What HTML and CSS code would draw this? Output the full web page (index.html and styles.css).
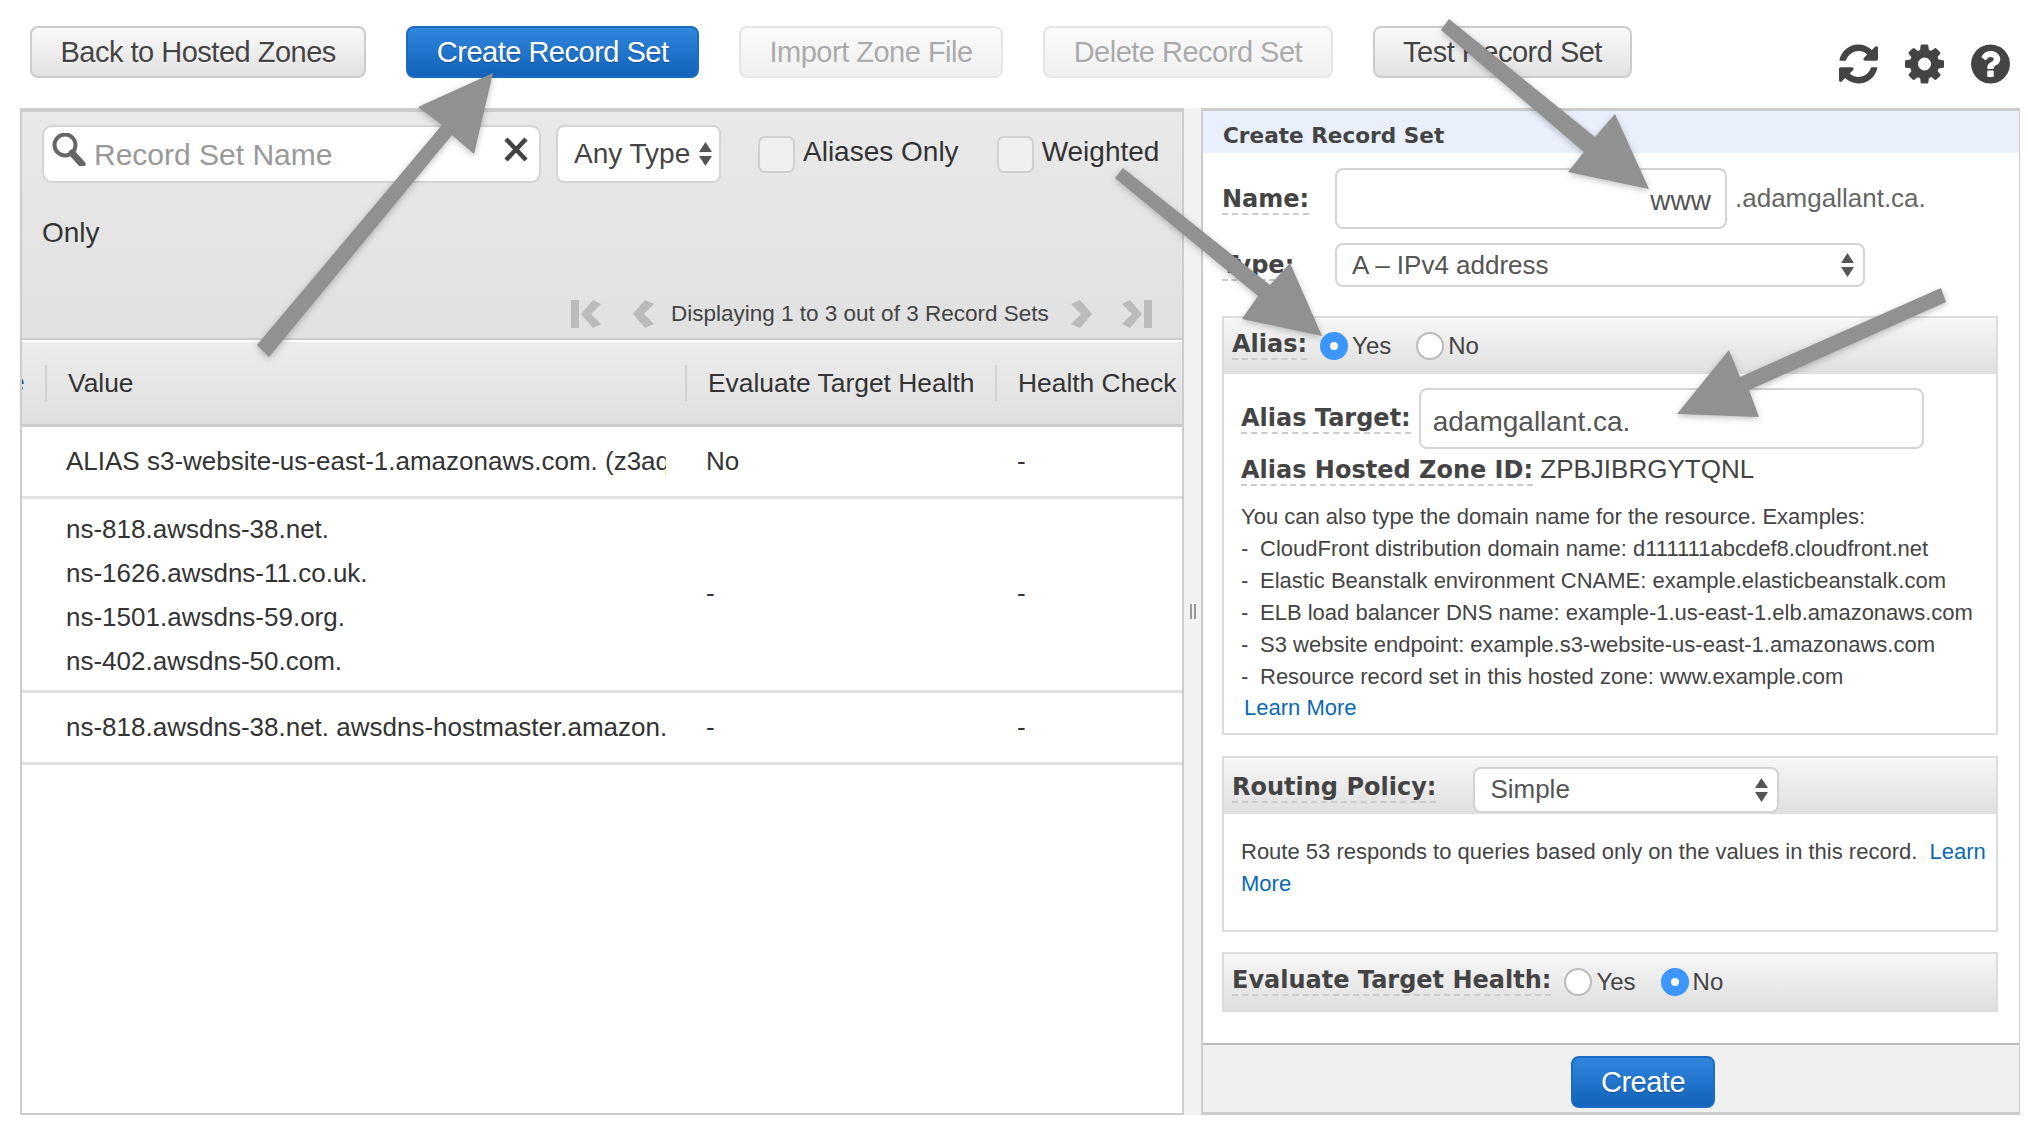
FILE: index.html
```html
<!DOCTYPE html>
<html lang="en">
<head>
    <meta charset="UTF-8">
    <title>Create Record Set</title>
    <link rel="stylesheet" href="styles.css">
</head>
<body>
    <div class="topbar">
        <button class="btn">Back to Hosted Zones</button>
        <button class="btn btn-primary">Create Record Set</button>
        <button class="btn btn-disabled">Import Zone File</button>
        <button class="btn btn-disabled">Delete Record Set</button>
        <button class="btn">Test Record Set</button>
        <div class="top-icons">
            <svg class="top-icon" viewBox="0 0 1536 1536"><path d="M1511 928q0 5-1 7-64 268-268 434.500t-478 166.500q-146 0-282.500-55t-243.500-157l-129 129q-19 19-45 19t-45-19-19-45v-448q0-26 19-45t45-19h448q26 0 45 19t19 45-19 45l-137 137q71 66 161 102t187 36q134 0 250-65t186-179q11-17 53-117 8-23 30-23h192q13 0 22.500 9.500t9.500 22.500zm25-800v448q0 26-19 45t-45 19h-448q-26 0-45-19t-19-45 19-45l138-138q-148-137-349-137-134 0-250 65t-186 179q-11 17-53 117-8 23-30 23h-199q-13 0-22.500-9.500t-9.500-22.500v-7q65-268 270-434.500t480-166.500q146 0 284 55.500t245 156.500l130-129q19-19 45-19t45 19 19 45z"/></svg>
            <svg class="top-icon" viewBox="128 128 1536 1536"><path fill-rule="evenodd" d="M1152 896q0-106-75-181t-181-75-181 75-75 181 75 181 181 75 181-75 75-181zm512-109v222q0 12-8 23t-20 13l-185 28q-19 54-39 91 35 50 107 138 10 12 10 25t-9 23q-27 37-99 108t-94 71q-12 0-26-9l-138-108q-44 23-91 38-16 136-29 186-7 28-36 28h-222q-14 0-24.500-8.500t-11.500-21.500l-28-184q-49-16-90-37l-141 107q-10 9-25 9-14 0-25-11-126-114-165-168-7-10-7-23 0-12 8-23 15-21 51-66.500t54-70.500q-27-50-41-99l-183-27q-13-2-21-12.500t-8-23.500v-222q0-12 8-23t19-13l186-28q14-46 39-92-40-57-107-138-10-12-10-24 0-10 9-23 26-36 98.500-107.500t94.500-71.500q13 0 26 10l138 107q44-23 91-38 16-136 29-186 7-28 36-28h222q14 0 24.500 8.500t11.500 21.500l28 184q49 16 90 37l142-107q9-9 24-9 13 0 25 10 129 119 165 170 7 8 7 22 0 12-8 23-15 21-51 66.500t-54 70.500q26 50 41 98l183 28q13 2 21 12.500t8 23.500z"/></svg>
            <svg class="top-icon" viewBox="128 128 1536 1536"><path fill-rule="evenodd" d="M1024 1376v-192q0-14-9-23t-23-9h-192q-14 0-23 9t-9 23v192q0 14 9 23t23 9h192q14 0 23-9t9-23zm256-672q0-88-55.500-163t-138.500-116-170-41q-243 0-371 213-15 24 8 42l132 100q7 6 19 6 16 0 25-12 53-68 86-92 34-24 86-24 48 0 85.500 26t37.500 59q0 38-20 61t-68 45q-63 28-115.500 86.500t-52.500 125.500v36q0 14 9 23t23 9h192q14 0 23-9t9-23q0-19 21.500-49.500t54.500-49.500q32-18 49-28.500t46-35 44.500-48 28-60.500 12.500-81zm384 192q0 209-103 385.500t-279.500 279.500-385.500 103-385.500-103-279.500-279.500-103-385.500 103-385.500 279.500-279.500 385.500-103 385.500 103 279.500 279.500 103 385.500z"/></svg>
        </div>
    </div>

    <div class="main">
        <div class="left-panel">
            <div class="filter-bar">
                <div class="filter-row">
                    <div class="search-box">
                        <svg class="search-icon" viewBox="0 0 34 33"><circle cx="13" cy="12" r="10.500" fill="none" stroke="#666" stroke-width="4"/><path d="M20 20l10 11" stroke="#666" stroke-width="7" stroke-linecap="round"/></svg>
                        <span class="placeholder">Record Set Name</span>
                        <svg class="clear-icon" viewBox="0 0 26 25"><path d="M3 2l20 21M23 2L3 23" stroke="#444" stroke-width="4.500"/></svg>
                    </div>
                    <div class="type-select">
                        <span>Any Type</span>
                        <svg class="updown" viewBox="0 0 13 24"><path d="M6.500 0L13 10H0zM6.500 24L0 14h13z" fill="#555"/></svg>
                    </div>
                    <label class="check check-aliases"><span class="check-box"></span>Aliases Only</label>
                    <label class="check"><span class="check-box"></span>Weighted</label>
                </div>
                <div class="only-line">Only</div>
                <div class="pager">
                    <svg class="pager-icon" viewBox="0 0 32 28"><path d="M1 0h8v28H1zM23 0l8 4-10 10 10 10-8 4L11 14z" fill="#bbb"/></svg>
                    <svg class="pager-icon pager-prev" viewBox="0 0 24 28"><path d="M13 0l9 4-10 10 10 10-9 4L1 14z" fill="#bbb"/></svg>
                    <span class="pager-text">Displaying 1 to 3 out of 3 Record Sets</span>
                    <svg class="pager-icon pager-next" viewBox="0 0 24 28"><path d="M11 0L2 4l10 10L2 24l9 4 12-14z" fill="#bbb"/></svg>
                    <svg class="pager-icon pager-last" viewBox="0 0 32 28"><path d="M23 0h8v28h-8zM9 0L1 4l10 10L1 24l8 4 12-14z" fill="#bbb"/></svg>
                </div>
            </div>
            <table class="records">
                <colgroup>
                    <col class="col-name"><col class="col-value"><col class="col-eval"><col class="col-health">
                </colgroup>
                <thead>
                    <tr>
                        <th class="th-cut">e</th>
                        <th><span class="th-label">Value</span></th>
                        <th><span class="th-label">Evaluate Target Health</span></th>
                        <th><span class="th-label">Health Check</span></th>
                    </tr>
                </thead>
                <tbody>
                    <tr class="row-short">
                        <td></td>
                        <td><div class="cell-clip">ALIAS s3-website-us-east-1.amazonaws.com. (z3aqbsw93qdmnz)</div></td>
                        <td>No</td>
                        <td>-</td>
                    </tr>
                    <tr class="row-tall">
                        <td></td>
                        <td class="cell-lines">
                            <div class="cell-line">ns-818.awsdns-38.net.</div>
                            <div class="cell-line">ns-1626.awsdns-11.co.uk.</div>
                            <div class="cell-line">ns-1501.awsdns-59.org.</div>
                            <div class="cell-line">ns-402.awsdns-50.com.</div>
                        </td>
                        <td class="cell-dash">-</td>
                        <td class="cell-dash">-</td>
                    </tr>
                    <tr class="row-short">
                        <td></td>
                        <td><div class="cell-clip">ns-818.awsdns-38.net. awsdns-hostmaster.amazon.com. 1 7200</div></td>
                        <td>-</td>
                        <td>-</td>
                    </tr>
                </tbody>
            </table>
        </div>

        <div class="splitter"><span class="grip"></span></div>

        <div class="right-panel">
            <div class="panel-title">Create Record Set</div>
            <div class="panel-body">
                <div class="field-row field-name">
                    <span class="field-label"><span class="term">Name:</span></span>
                    <div class="text-input name-input">www</div>
                    <span class="domain">.adamgallant.ca.</span>
                </div>
                <div class="field-row field-type">
                    <span class="field-label"><span class="term">Type:</span></span>
                    <div class="select-box type-box">
                        <span>A – IPv4 address</span>
                        <svg class="updown" viewBox="0 0 13 24"><path d="M6.500 0L13 10H0zM6.500 24L0 14h13z" fill="#555"/></svg>
                    </div>
                </div>

                <div class="box box-alias">
                    <div class="box-head">
                        <span class="term">Alias:</span>
                        <span class="radio radio-on radio-first"></span><span class="radio-text">Yes</span>
                        <span class="radio radio-second"></span><span class="radio-text">No</span>
                    </div>
                    <div class="box-body">
                        <div class="target-row">
                            <span class="term target-label">Alias Target:</span>
                            <div class="text-input target-input">adamgallant.ca.</div>
                        </div>
                        <div class="zone-row"><span class="term">Alias Hosted Zone ID:</span> ZPBJIBRGYTQNL</div>
                        <div class="help-line">You can also type the domain name for the resource. Examples:</div>
                        <div class="help-line help-item">CloudFront distribution domain name: d111111abcdef8.cloudfront.net</div>
                        <div class="help-line help-item">Elastic Beanstalk environment CNAME: example.elasticbeanstalk.com</div>
                        <div class="help-line help-item">ELB load balancer DNS name: example-1.us-east-1.elb.amazonaws.com</div>
                        <div class="help-line help-item">S3 website endpoint: example.s3-website-us-east-1.amazonaws.com</div>
                        <div class="help-line help-item">Resource record set in this hosted zone: www.example.com</div>
                        <a class="link learn-more" href="#">Learn More</a>
                    </div>
                </div>

                <div class="box box-routing">
                    <div class="box-head routing-head">
                        <span class="term routing-label">Routing Policy:</span>
                        <div class="select-box routing-select">
                            <span>Simple</span>
                            <svg class="updown" viewBox="0 0 13 24"><path d="M6.500 0L13 10H0zM6.500 24L0 14h13z" fill="#555"/></svg>
                        </div>
                    </div>
                    <div class="box-body routing-text">
                        Route 53 responds to queries based only on the values in this record.&nbsp; <a class="link" href="#">Learn More</a>
                    </div>
                </div>

                <div class="box box-health">
                    <div class="box-head">
                        <span class="term">Evaluate Target Health:</span>
                        <span class="radio radio-first"></span><span class="radio-text">Yes</span>
                        <span class="radio radio-on radio-second"></span><span class="radio-text">No</span>
                    </div>
                </div>
            </div>
            <div class="panel-footer">
                <button class="btn btn-primary btn-create">Create</button>
            </div>
        </div>
    </div>

    <svg class="arrows" viewBox="0 0 2028 1124">
        <polygon points="257,345 442,125 418,107 493,73 474,154 452,135 269,357"/>
        <polygon points="1449,19 1595,137 1615,114 1649,189 1568,172 1584,152 1441,30"/>
        <polygon points="1123,168 1270,285 1290,263 1322,336 1242,319 1258,296 1115,178"/>
        <polygon points="1941,288 1740,377 1729,350 1677,414 1759,417 1749,390 1946,302"/>
    </svg>
</body>
</html>
```

FILE: styles.css
```css
* {
    box-sizing: border-box;
}

body {
    position: relative;
    margin: 0;
    height: 1124px;
    overflow: hidden;
    background-color: white;
    font-family: "Liberation Sans", Arial, sans-serif;
    font-size: 24px;
    color: #444;
}

/* top buttons */
.topbar {
    display: flex;
    align-items: flex-start;
    gap: 40px;
    height: 108px;
    padding: 26px 18px 0 30px;
}

.btn {
    height: 52px;
    padding: 0 28.500px;
    border: 2px solid #ccc;
    border-radius: 8px;
    background: linear-gradient(#fafafa, #e2e2e2);
    font-family: inherit;
    font-size: 29px;
    letter-spacing: -0.5px;
    color: #444;
    text-shadow: 0 1px 0 white;
}

.btn-primary {
    border-color: #1a6cc2;
    background: linear-gradient(#3186de, #1263b9);
    color: white;
    text-shadow: 0 1px 1px rgba(0, 0, 0, 0.3);
}

.btn-disabled {
    border-color: #e6e6e6;
    background: linear-gradient(#fafafa, #f0f0f0);
    color: #aaa;
}

.btn-create {
    width: 144px;
    padding: 0;
}

.top-icons {
    display: flex;
    gap: 27px;
    margin-top: 18px;
    margin-left: auto;
}

.top-icon {
    width: 39px;
    height: 40px;
    fill: #444;
}

/* main panels */
.main {
    display: flex;
    height: 1007px;
    margin-right: 8px;
    margin-left: 20px;
}

.left-panel {
    flex: none;
    width: 1164px;
    border: 2px solid #ccc;
    border-top-width: 4px;
    overflow: hidden;
}

.filter-bar {
    height: 228px;
    padding: 13px 20px 0 20px;
    border-bottom: 2px solid #ccc;
    background: linear-gradient(#e9e9e9, #e1e1e1);
}

.filter-row {
    display: flex;
    align-items: flex-start;
}

.search-box {
    position: relative;
    flex: none;
    width: 499px;
    height: 58px;
    padding: 11px 0 0 50px;
    border: 2px solid #d4d4d4;
    border-radius: 10px;
    background-color: white;
    font-size: 30px;
}

.placeholder {
    color: #999;
}

.search-icon {
    position: absolute;
    top: 6px;
    left: 8px;
    width: 34px;
    height: 33px;
}

.clear-icon {
    position: absolute;
    top: 10px;
    right: 10px;
    width: 26px;
    height: 25px;
}

.type-select {
    display: flex;
    flex: none;
    align-items: center;
    justify-content: space-between;
    width: 165px;
    height: 58px;
    margin-left: 15px;
    padding: 0 7px 0 16px;
    border: 2px solid #d4d4d4;
    border-radius: 8px;
    background-color: white;
    font-size: 28px;
    white-space: nowrap;
}

.updown {
    flex: none;
    width: 13px;
    height: 24px;
}

.check {
    display: flex;
    flex: none;
    align-items: flex-start;
    gap: 8px;
    margin-top: 11px;
    margin-left: 37px;
    font-size: 28px;
    line-height: 32px;
    white-space: nowrap;
    color: #333;
}

.check-aliases ~ .check {
    margin-left: 38px;
}

.check-box {
    width: 37px;
    height: 37px;
    border: 2px solid #d0d0d0;
    border-radius: 7px;
    background-color: #efefef;
}

.only-line {
    margin-top: 33px;
    font-size: 28px;
    line-height: 33px;
    color: #333;
}

.pager {
    display: flex;
    align-items: center;
    margin-top: 51px;
    margin-left: 528px;
    font-size: 22.500px;
    white-space: nowrap;
}

.pager-icon {
    flex: none;
    width: 32px;
    height: 28px;
}

.pager-prev {
    width: 24px;
    margin-left: 30px;
}

.pager-text {
    margin-left: 15px;
}

.pager-next {
    width: 24px;
    margin-left: 20px;
}

.pager-last {
    margin-left: 28px;
}

/* records table */
.records {
    width: 1160px;
    margin-top: 2px;
    table-layout: fixed;
    border-collapse: collapse;
}

.col-name {
    width: 23px;
}

.col-value {
    width: 640px;
}

.col-eval {
    width: 310px;
}

.records th {
    height: 83px;
    padding: 0;
    border-bottom: 3px solid #ccc;
    background: linear-gradient(#ececec, #e0e0e0);
    text-align: left;
    font-size: 26.400px;
    font-weight: normal;
    white-space: nowrap;
    overflow: hidden;
}

.records .th-cut {
    text-indent: -12px;
}

.th-label {
    display: block;
    height: 36px;
    padding-left: 21px;
    border-left: 2px solid #d2d2d2;
    line-height: 36px;
    color: #333;
}

.records td {
    padding: 0 0 0 21px;
    border-bottom: 3px solid #e2e2e2;
    font-size: 26px;
    color: #333;
}

.row-short {
    height: 72px;
}

.row-tall {
    height: 194px;
}

.records tr td:first-child {
    padding: 0;
}

.records tr td:last-child {
    padding-left: 22px;
}

.records .cell-lines {
    padding-top: 2px;
}

.records .cell-dash {
    padding-bottom: 2px;
}

.cell-clip {
    width: 600px;
    overflow: hidden;
    white-space: nowrap;
}

.cell-line {
    height: 44px;
    line-height: 44px;
}

.splitter {
    position: relative;
    flex: none;
    width: 17px;
    background-color: #f2f2f2;
}

.grip {
    position: absolute;
    top: 496px;
    left: 6px;
    width: 6px;
    height: 15px;
    border-left: 2px solid #999;
    border-right: 2px solid #999;
}

/* create record set form */
.right-panel {
    display: flex;
    flex: 1;
    flex-direction: column;
    border: 2px solid #ccc;
    border-top-width: 3px;
    border-bottom: none;
    border-right-width: 1px;
}

.panel-title {
    height: 42px;
    padding-left: 20px;
    background-color: #e9f0fb;
    font-family: "DejaVu Sans", Verdana, sans-serif;
    font-size: 21.600px;
    font-weight: bold;
    line-height: 49px;
    color: #444;
}

.panel-body {
    flex: 1;
    padding: 15px 21px 0 19px;
}

.term {
    border-bottom: 2px dashed #ccc;
    font-family: "DejaVu Sans", Verdana, sans-serif;
    font-size: 24px;
    font-weight: bold;
    color: #444;
}

.field-row {
    display: flex;
    align-items: center;
}

.field-label {
    flex: none;
    width: 113px;
}

.field-type {
    margin-top: 14px;
}

.text-input {
    border: 2px solid #d4d4d4;
    border-radius: 8px;
    background-color: white;
    font-size: 28px;
    color: #555;
}

.name-input {
    width: 392px;
    height: 61px;
    padding-right: 14px;
    text-align: right;
    line-height: 62px;
}

.domain {
    margin-left: 8px;
    font-size: 26px;
    color: #666;
}

.select-box {
    display: flex;
    align-items: center;
    justify-content: space-between;
    padding: 0 9px 0 15px;
    border: 2px solid #d4d4d4;
    border-radius: 8px;
    background-color: white;
    font-size: 26px;
    color: #555;
}

.type-box {
    width: 530px;
    height: 44px;
}

.box {
    border: 2px solid #ddd;
}

.box-alias {
    height: 419px;
    margin-top: 29px;
}

.box-routing {
    height: 176px;
    margin-top: 21px;
}

.box-health {
    height: 60px;
    margin-top: 20px;
    border-bottom-width: 4px;
}

.box-head {
    display: flex;
    align-items: center;
    height: 56px;
    padding-left: 8px;
    background: linear-gradient(#f7f7f7, #dfdfdf);
    font-size: 24px;
    color: #444;
}

.box-head .term {
    margin-top: -3px;
}

.routing-head {
    padding-top: 7px;
}

.radio {
    flex: none;
    width: 28px;
    height: 28px;
    border: 2px solid #bbb;
    border-radius: 50%;
    background-color: white;
}

.radio-on {
    border: 10px solid #3c96fb;
}

.radio-first {
    margin-left: 13px;
}

.radio-second {
    margin-left: 25px;
}

.radio-text {
    margin-left: 4px;
}

.box-body {
    padding: 14px 16px 0 17px;
    font-size: 22px;
    color: #444;
}

.target-row {
    display: flex;
    align-items: center;
}

.target-label {
    margin-right: 8px;
}

.target-input {
    width: 505px;
    height: 61px;
    padding-left: 12px;
    line-height: 63px;
}

.zone-row {
    height: 36px;
    margin-top: 2px;
    font-size: 26px;
    line-height: 36px;
    white-space: nowrap;
}

.help-line {
    height: 32px;
    line-height: 32px;
    white-space: nowrap;
}

.zone-row + .help-line {
    margin-top: 14px;
}

.help-item {
    position: relative;
    padding-left: 19px;
}

.help-item::before {
    content: "-";
    position: absolute;
    left: 0;
}

.link {
    color: #0a69b4;
    text-decoration: none;
}

.learn-more {
    display: block;
    padding-left: 3px;
    line-height: 30px;
}

.routing-label {
    margin-right: 37px;
}

.routing-select {
    width: 306px;
    height: 46px;
}

.routing-text {
    padding-top: 22px;
    padding-right: 8px;
    line-height: 32px;
}

.panel-footer {
    display: flex;
    justify-content: center;
    height: 72px;
    padding-top: 11px;
    padding-left: 64px;
    border-top: 2px solid #bbb;
    border-bottom: 3px solid #ccc;
    background-color: #f0f0f0;
}

/* callout arrows drawn over the screenshot */
.arrows {
    position: absolute;
    top: 0;
    left: 0;
    width: 2028px;
    height: 1124px;
    fill: #919191;
    filter: drop-shadow(0 2px 3px rgba(0, 0, 0, 0.25));
    pointer-events: none;
}
```
